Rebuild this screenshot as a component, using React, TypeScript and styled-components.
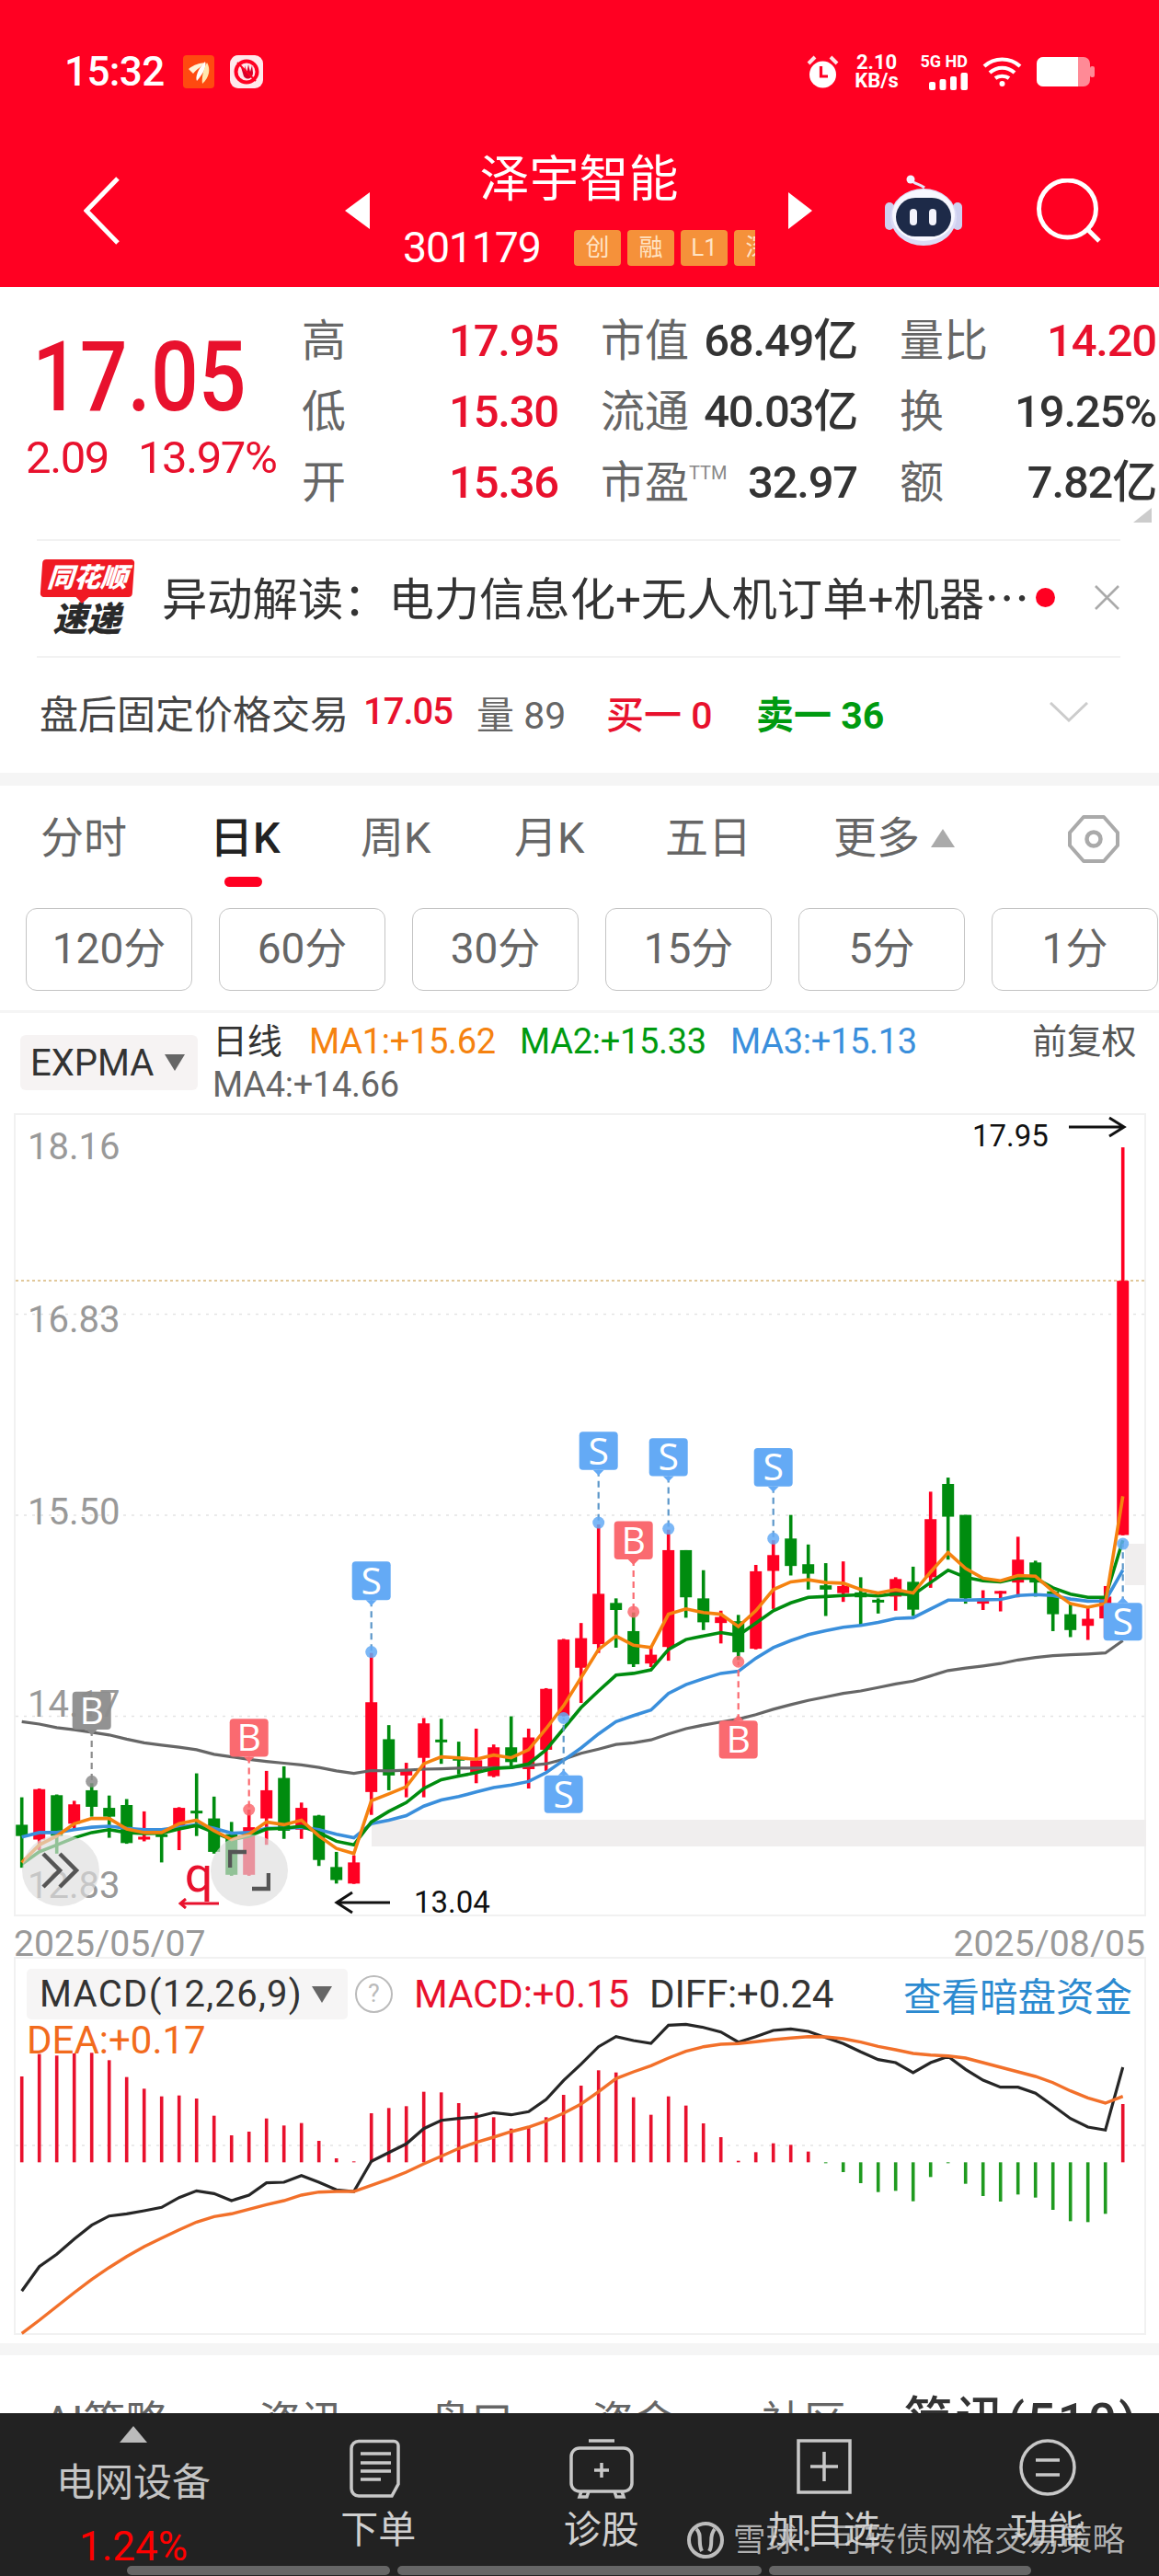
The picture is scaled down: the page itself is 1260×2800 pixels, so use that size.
import React from "react";
import styled, { createGlobalStyle } from "styled-components";

const Global = createGlobalStyle`
  html, body { margin: 0; padding: 0; background: #fff; }
  body { font-family: Roboto, "Noto Sans CJK SC", sans-serif; }
  * { box-sizing: border-box; }
`;

const RED = "#ff0022";
const TEXT_RED = "#e8112d";
const GREEN = "#008c0f";

const Page = styled.div`
  width: 1260px;
  height: 2800px;
  overflow: hidden;
  background: #fff;
  display: flex;
  flex-direction: column;
`;

/* ---------- header ---------- */
const Header = styled.header`
  height: 312px;
  flex: none;
  background: ${RED};
  color: #fff;
`;
const StatusBar = styled.div`
  height: 156px;
  display: flex;
  align-items: center;
  padding: 0 70px 0 70px;
`;
const Clock = styled.span`
  font-size: 44px;
  font-weight: 500;
  line-height: 1;
  letter-spacing: -0.6px;
  width: 129px;
`;
const StatusApps = styled.div`
  display: flex;
  gap: 17px;
  align-items: center;
`;
const StatusRight = styled.div`
  margin-left: auto;
  display: flex;
  align-items: center;
  gap: 16px;
`;
const NetSpeed = styled.div`
  display: flex;
  flex-direction: column;
  align-items: center;
  font-size: 22px;
  font-weight: 700;
  line-height: 20px;
  width: 50px;
  white-space: nowrap;
`;
const SignalBlock = styled.div`
  display: flex;
  flex-direction: column;
  align-items: flex-end;
  gap: 5px;
  width: 58px;
`;
const SignalLabel = styled.span`
  font-size: 18px;
  font-weight: 700;
  line-height: 15px;
  white-space: nowrap;
`;
const NavBar = styled.div`
  height: 156px;
  display: flex;
  align-items: center;
  padding: 0 0 10px 91px;
`;
const CenterGroup = styled.div`
  margin-left: 245px;
  display: flex;
  align-items: center;
  gap: 36px;
`;
const TitleStack = styled.div`
  width: 383px;
  display: flex;
  flex-direction: column;
  gap: 28px;
`;
const Title = styled.div`
  font-size: 54px;
  line-height: 52px;
  text-align: center;
`;
const CodeRow = styled.div`
  display: flex;
  align-items: center;
  height: 39px;
`;
const Code = styled.span`
  font-size: 46.5px;
  width: 186px;
  line-height: 39px;
  letter-spacing: -1.2px;
`;
const TagClip = styled.div`
  width: 197px;
  overflow: hidden;
  display: flex;
  gap: 7px;
`;
const Tag = styled.span`
  flex: none;
  width: 51px;
  height: 39px;
  border-radius: 4px;
  background: #f5913a;
  color: #ffe3c4;
  font-size: 26px;
  line-height: 39px;
  text-align: center;
`;
const NavIcons = styled.div`
  margin-left: 79px;
  display: flex;
  align-items: center;
  gap: 81px;
`;

/* ---------- quote ---------- */
const QuoteRow = styled.section`
  position: relative;
  height: 274px;
  flex: none;
  display: flex;
  padding-top: 20px;
`;
const PriceColumn = styled.div`
  width: 328px;
  flex: none;
  padding-top: 28px;
`;
const BigPrice = styled.div`
  font-size: 106px;
  font-weight: 500;
  line-height: 100px;
  color: ${TEXT_RED};
  margin-left: 35px;
  transform: scaleX(0.86);
  transform-origin: left;
`;
const ChangeRow = styled.div`
  margin: 13px 0 0 28px;
  display: flex;
  gap: 32px;
  font-size: 49px;
  line-height: 50px;
  color: ${TEXT_RED};
  letter-spacing: -1.4px;
  white-space: nowrap;
`;
const StatsGrid = styled.div`
  display: grid;
  grid-template-columns: 279px 279px 279px;
  grid-auto-rows: 77px;
  column-gap: 46px;
`;
const Stat = styled.div`
  display: flex;
  justify-content: space-between;
  align-items: center;
  white-space: nowrap;
`;
const StatLabel = styled.span`
  font-size: 48px;
  color: #666;
  line-height: 77px;
`;
const Sup = styled.sup`
  font-size: 20px;
  color: #888;
  line-height: 1;
  vertical-align: 20px;
`;
const StatValue = styled.span<{ $red?: boolean }>`
  font-size: 49px;
  font-weight: 500;
  letter-spacing: -1.2px;
  line-height: 77px;
  color: ${(p) => (p.$red ? TEXT_RED : "#333")};
`;
const CornerMark = styled.div`
  position: absolute;
  left: 1232px;
  top: 240px;
  width: 0;
  height: 0;
  border-bottom: 16px solid #ccc;
  border-left: 20px solid transparent;
`;
const Divider = styled.div`
  height: 2px;
  flex: none;
  margin: 0 42px 0 40px;
  background: #f2f2f2;
`;
const NewsRow = styled.div`
  height: 125px;
  flex: none;
  display: flex;
  align-items: center;
  padding: 0 0 2px 43px;
`;
const Logo = styled.div`
  width: 103px;
  flex: none;
  display: flex;
  flex-direction: column;
  align-items: center;
`;
const LogoBubble = styled.div`
  position: relative;
  width: 100px;
  height: 41px;
  border-radius: 4px;
  background: #f01a24;
  color: #fff;
  font-size: 29px;
  font-weight: 900;
  font-style: italic;
  line-height: 41px;
  text-align: center;
  white-space: nowrap;
  transform: skewX(-4deg);
  &::after {
    content: "";
    position: absolute;
    left: 38px;
    bottom: -7px;
    border-top: 8px solid #f01a24;
    border-left: 8px solid transparent;
    border-right: 8px solid transparent;
  }
`;
const LogoText = styled.div`
  margin-top: 8px;
  font-size: 37px;
  line-height: 34px;
  font-weight: 900;
  font-style: italic;
  color: #2a2a2a;
`;
const NewsText = styled.div`
  width: 945px;
  margin: 0 0 5px 30px;
  font-size: 49.3px;
  color: #333;
  white-space: nowrap;
  overflow: hidden;
`;
const RedDot = styled.span`
  width: 21px;
  height: 21px;
  flex: none;
  margin-left: 5px;
  border-radius: 50%;
  background: ${RED};
`;
const CloseIcon = styled.span`
  margin-left: 43px;
  display: flex;
`;
const AfterRow = styled.div`
  height: 125px;
  flex: none;
  display: flex;
  align-items: center;
  padding: 0 0 8px 43px;
  font-size: 42px;
  white-space: nowrap;
`;
const AfterLabel = styled.span`
  width: 352px;
  color: #444;
`;
const AfterPrice = styled.span`
  width: 123px;
  color: ${TEXT_RED};
  font-size: 40px;
  font-weight: 500;
  letter-spacing: -1px;
`;
const AfterVol = styled.span`
  width: 141px;
  color: #666;
  font-weight: 400;
  font-size: 41px;
`;
const AfterBuy = styled.span`
  width: 163px;
  color: ${TEXT_RED};
  font-weight: 500;
  font-size: 41px;
`;
const AfterSell = styled.span`
  width: 319px;
  color: #009a10;
  font-weight: 700;
  font-size: 41px;
`;
const GrayBand = styled.div<{ $h: number; $mt?: number }>`
  height: ${(p) => p.$h}px;
  margin-top: ${(p) => p.$mt || 0}px;
  flex: none;
  background: #f5f5f5;
`;

/* ---------- period tabs ---------- */
const PeriodTabs = styled.nav`
  height: 116px;
  flex: none;
  display: grid;
  grid-template-columns: 184px 164px 167px 164px 183px 255px auto;
  align-items: center;
  padding: 0 0 0 44px;
`;
const PeriodTab = styled.span<{ $active?: boolean }>`
  position: relative;
  font-size: 47px;
  line-height: 60px;
  margin-bottom: 3px;
  color: ${(p) => (p.$active ? "#222" : "#666")};
  font-weight: ${(p) => (p.$active ? 500 : 400)};
  display: flex;
  align-items: center;
  gap: 12px;
  ${(p) =>
    p.$active
      ? `&::after { content: ""; position: absolute; left: 16px; top: 72px; width: 41px; height: 11px; border-radius: 6px; background: ${RED}; }`
      : ""}
`;
const MoreMark = styled.span`
  width: 0;
  height: 0;
  border-bottom: 20px solid #aaa;
  border-left: 13px solid transparent;
  border-right: 13px solid transparent;
`;
const IntervalRow = styled.div`
  display: flex;
  flex: none;
  gap: 29px;
  padding-left: 28px;
  margin-top: 17px;
  width: 1300px;
`;
const IntervalButton = styled.div`
  width: 181px;
  height: 90px;
  border: 1.5px solid #c4c4c4;
  border-radius: 12px;
  font-size: 46px;
  line-height: 87px;
  text-align: center;
  color: #666;
`;
const ThinBand = styled.div`
  height: 3px;
  flex: none;
  margin-top: 21px;
  background: #f5f5f5;
`;

/* ---------- indicator legend ---------- */
const LegendRow = styled.div`
  height: 109px;
  flex: none;
  display: flex;
`;
const IndicatorPill = styled.div`
  margin: 24px 0 0 22px;
  width: 193px;
  height: 60px;
  flex: none;
  border-radius: 6px;
  background: #f6f3f3;
  display: flex;
  align-items: center;
  gap: 12px;
  padding-left: 11px;
  font-size: 40px;
  color: #333;
`;
const DownMark = styled.span<{ $c?: string }>`
  width: 0;
  height: 0;
  border-top: 18px solid ${(p) => p.$c || "#666"};
  border-left: 11px solid transparent;
  border-right: 11px solid transparent;
`;
const LegendBody = styled.div`
  margin-left: 16px;
  padding-top: 8px;
  flex: 1;
`;
const LegendLine = styled.div`
  display: grid;
  grid-template-columns: 105px 229px 229px 328px auto;
  height: 47px;
  align-items: center;
  white-space: nowrap;
`;
const LegendText = styled.span<{ $c: string; $size?: number }>`
  color: ${(p) => p.$c};
  font-size: ${(p) => p.$size || 38}px;
  line-height: 47px;
  letter-spacing: -0.3px;
`;

/* ---------- chart panes ---------- */
const KPane = styled.div`
  position: relative;
  flex: none;
  width: 1231px;
  height: 873px;
  margin-left: 15px;
  box-shadow: inset 0 0 0 2px #f1f1f1;
`;
const ChartSvg = styled.svg`
  position: absolute;
  left: 0;
  top: 0;
  overflow: visible;
`;
const AxisLabel = styled.text`
  font-size: 40px;
  fill: #999;
  font-family: Roboto, sans-serif;
`;
const NoteLabel = styled.text`
  font-size: 33px;
  fill: #111;
  font-family: Roboto, sans-serif;
`;
const TagLetter = styled.text`
  font-size: 41px;
  fill: #fff;
  font-family: "Open Sans", sans-serif;
  text-anchor: middle;
`;
const FloatButton = styled.div<{ $left: number }>`
  position: absolute;
  left: ${(p) => p.$left}px;
  top: 784px;
  width: 84px;
  height: 78px;
  border-radius: 50%;
  background: rgba(222, 222, 222, 0.66);
  display: flex;
  align-items: center;
  justify-content: center;
`;
const RedQ = styled.div`
  position: absolute;
  left: 177px;
  top: 803px;
  width: 48px;
  display: flex;
  flex-direction: column;
  align-items: center;
  color: ${TEXT_RED};
  font-size: 54px;
  line-height: 50px;
`;
const DateRow = styled.div`
  height: 44px;
  flex: none;
  margin: 0 15px;
  padding-top: 16px;
  display: flex;
  justify-content: space-between;
  font-size: 39.2px;
  line-height: 28px;
  color: #999;
`;
const MacdPane = styled.div`
  position: relative;
  flex: none;
  width: 1231px;
  height: 411px;
  margin-left: 15px;
  box-shadow: inset 0 0 0 2px #f1f1f1;
`;
const MacdHead = styled.div`
  position: relative;
  display: flex;
  align-items: center;
  height: 55px;
  margin-top: 13px;
  padding-left: 14px;
  white-space: nowrap;
`;
const MacdPill = styled.div`
  width: 349px;
  height: 55px;
  border-radius: 5px;
  background: #f6f5f5;
  display: flex;
  align-items: center;
  gap: 10px;
  padding-left: 14px;
  font-size: 40px;
  letter-spacing: 1.3px;
  color: #333;
`;
const HelpMark = styled.span`
  width: 41px;
  height: 41px;
  margin-left: 8px;
  border: 2px solid #bbb;
  border-radius: 50%;
  color: #bbb;
  font-size: 27px;
  line-height: 37px;
  text-align: center;
`;
const MacdValue = styled.span<{ $c: string; $ml: number }>`
  color: ${(p) => p.$c};
  margin-left: ${(p) => p.$ml}px;
  font-size: 42px;
  letter-spacing: -0.1px;
`;
const MacdLink = styled.span`
  margin-left: auto;
  padding-right: 15px;
  color: #2b8ad0;
  font-size: 41.5px;
`;
const DeaLine = styled.div`
  position: relative;
  padding-left: 14px;
  margin-top: 3px;
  color: #f26b1d;
  font-size: 42px;
  line-height: 40px;
`;

/* ---------- bottom ---------- */
const SectionTabs = styled.div`
  height: 63px;
  flex: none;
  overflow: hidden;
  display: grid;
  grid-template-columns: 233px 185px 177px 185px 154px auto;
  padding: 42px 0 0 48px;
  align-items: start;
  white-space: nowrap;
`;
const SectionTab = styled.span<{ $active?: boolean }>`
  font-size: ${(p) => (p.$active ? 54 : 46)}px;
  font-weight: ${(p) => (p.$active ? 500 : 400)};
  color: ${(p) => (p.$active ? "#333" : "#666")};
  line-height: 60px;
  letter-spacing: ${(p) => (p.$active ? 2.6 : 0)}px;
`;
const Footer = styled.footer`
  position: relative;
  height: 179px;
  flex: none;
  background: #222;
  display: flex;
  flex-direction: column;
`;
const FooterGrid = styled.div`
  height: 166px;
  display: grid;
  grid-template-columns: 290px repeat(4, 242.5px);
`;
const SectorCell = styled.div`
  display: flex;
  flex-direction: column;
  align-items: center;
  padding-top: 14px;
`;
const UpMark = styled.span`
  width: 0;
  height: 0;
  border-bottom: 18px solid #bbb;
  border-left: 15px solid transparent;
  border-right: 15px solid transparent;
`;
const SectorName = styled.span`
  margin-top: 23px;
  color: #c4c4c4;
  font-size: 42px;
  line-height: 41px;
`;
const SectorPct = styled.span`
  margin-top: 29px;
  color: #f00;
  font-size: 44px;
  line-height: 40px;
`;
const ActionCell = styled.div`
  display: flex;
  flex-direction: column;
  align-items: center;
  padding-top: 27px;
`;
const ActionIcon = styled.svg`
  width: 72px;
  height: 66px;
  flex: none;
  fill: none;
  stroke: #c8c8c8;
  stroke-width: 3.5;
`;
const ActionLabel = styled.span`
  margin-top: 14px;
  color: #d0d0d0;
  font-size: 41px;
  line-height: 41px;
`;
const Watermark = styled.div`
  position: absolute;
  left: 746px;
  top: 116px;
  display: flex;
  align-items: center;
  gap: 9px;
  color: rgba(255, 255, 255, 0.66);
  font-size: 35.5px;
  line-height: 43px;
  white-space: nowrap;
  text-shadow: 0 0 2px rgba(0, 0, 0, 0.4);
`;
const GestureRow = styled.div`
  display: flex;
  gap: 8px;
  padding-left: 138px;
`;
const GestureBar = styled.span<{ $w: number }>`
  width: ${(p) => p.$w}px;
  height: 10px;
  border-radius: 5px;
  background: #666;
`;

/* ---------- chart data (values digitised from the reference) ---------- */
const cx = (i: number) => 23.7 + 19.0 * i;
const ky = (z: number) => 1500 + z / 2.613;
const my = (z: number) => 2060 + z / 3;

type Candle = [number, number, number, number, "r" | "g"];
const candles: Candle[] = [
  [1180, 1258, 1290, 1380, "g"], [1155, 1157, 1300, 1330, "r"], [1172, 1174, 1290, 1340, "g"], [1190, 1200, 1255, 1270, "r"],
  [1140, 1160, 1207, 1235, "g"], [1175, 1210, 1235, 1295, "g"], [1185, 1202, 1310, 1312, "g"], [1220, 1292, 1300, 1305, "r"],
  [1285, 1285, 1288, 1365, "g"], [1208, 1210, 1260, 1330, "r"], [1112, 1218, 1222, 1290, "g"], [1178, 1240, 1335, 1340, "g"],
  [1250, 1285, 1400, 1403, "g"], [1215, 1265, 1400, 1403, "r"], [1105, 1160, 1240, 1315, "r"], [1092, 1125, 1275, 1298, "g"],
  [1195, 1210, 1272, 1298, "r"], [1230, 1232, 1358, 1375, "g"], [1335, 1378, 1415, 1425, "g"], [1345, 1365, 1425, 1426, "r"],
  [770, 910, 1165, 1230, "r"], [975, 1015, 1118, 1160, "g"], [1082, 1105, 1118, 1180, "r"], [955, 970, 1068, 1180, "r"],
  [957, 1016, 1020, 1085, "g"], [1022, 1068, 1072, 1115, "g"], [985, 1075, 1110, 1140, "r"], [1030, 1038, 1120, 1123, "r"],
  [950, 1038, 1080, 1100, "g"], [985, 1010, 1100, 1155, "r"], [870, 872, 1045, 1105, "r"], [730, 732, 948, 950, "r"],
  [685, 728, 812, 912, "r"], [405, 602, 745, 770, "r"], [615, 628, 648, 755, "g"], [655, 708, 802, 810, "g"],
  [750, 775, 800, 810, "r"], [420, 478, 753, 792, "r"], [478, 478, 612, 670, "g"], [535, 615, 683, 705, "g"],
  [650, 668, 685, 743, "r"], [662, 680, 768, 790, "g"], [520, 538, 758, 760, "r"], [450, 492, 537, 645, "r"],
  [378, 445, 523, 550, "g"], [462, 518, 545, 590, "g"], [515, 578, 590, 665, "g"], [510, 580, 600, 625, "r"],
  [555, 598, 612, 695, "g"], [615, 619, 623, 658, "g"], [555, 560, 610, 650, "r"], [525, 568, 647, 665, "g"],
  [312, 390, 555, 585, "r"], [272, 290, 383, 505, "g"], [378, 378, 615, 630, "g"], [592, 622, 630, 648, "r"],
  [594, 594, 600, 652, "r"], [440, 505, 570, 612, "r"], [508, 513, 570, 610, "g"], [595, 595, 660, 708, "g"],
  [630, 660, 705, 725, "g"], [640, 673, 693, 733, "r"], [580, 610, 672, 727, "r"], [-666, -287, 435, 436, "r"],
];

const ma1 = [1365, 1315, 1290, 1255, 1240, 1240, 1270, 1280, 1280, 1255, 1245, 1275, 1300, 1285, 1250, 1258, 1245, 1290, 1325, 1340, 1190, 1170, 1150, 1085, 1065, 1068, 1072, 1060, 1068, 1045, 985, 920, 840, 760, 722, 748, 755, 660, 645, 655, 660, 695, 650, 590, 568, 562, 570, 572, 590, 600, 590, 600, 540, 485, 530, 558, 565, 550, 552, 595, 630, 640, 630, 325];
const ma2 = [1370, 1335, 1315, 1295, 1280, 1272, 1280, 1283, 1282, 1270, 1260, 1280, 1300, 1290, 1270, 1268, 1262, 1280, 1305, 1315, 1250, 1220, 1195, 1155, 1130, 1120, 1110, 1098, 1095, 1085, 1045, 985, 925, 878, 833, 828, 818, 760, 732, 722, 712, 720, 685, 650, 628, 612, 610, 607, 605, 608, 602, 605, 570, 535, 555, 565, 568, 557, 558, 585, 603, 612, 612, 450];
const ma3 = [1293, 1280, 1280, 1272, 1265, 1262, 1268, 1272, 1272, 1265, 1258, 1268, 1282, 1280, 1268, 1268, 1265, 1272, 1285, 1295, 1255, 1245, 1232, 1205, 1188, 1178, 1165, 1152, 1145, 1135, 1110, 1075, 1040, 1000, 965, 948, 932, 885, 860, 843, 828, 822, 785, 755, 735, 718, 707, 697, 692, 683, 672, 670, 645, 620, 620, 619, 618, 607, 604, 607, 617, 623, 622, 535];
const ma4 = [965, 972, 982, 988, 995, 1003, 1015, 1025, 1032, 1038, 1045, 1058, 1065, 1072, 1078, 1083, 1088, 1095, 1105, 1112, 1104, 1105, 1103, 1100, 1099, 1097, 1097, 1096, 1095, 1090, 1085, 1072, 1055, 1043, 1030, 1025, 1017, 1000, 985, 975, 966, 958, 945, 930, 917, 905, 895, 885, 878, 868, 858, 850, 835, 820, 813, 807, 800, 790, 783, 778, 775, 773, 770, 735];

const macdBars = [585, 512, 517, 510, 508, 532, 587, 625, 650, 647, 657, 713, 777, 765, 722, 745, 737, 795, 852, 862, 705, 688, 682, 635, 637, 672, 703, 718, 755, 748, 718, 645, 615, 565, 572, 653, 710, 650, 680, 738, 783, 860, 832, 803, 808, 830, 868, 897, 933, 962, 958, 992, 913, 868, 935, 975, 993, 970, 980, 1020, 1057, 1060, 1033, 675];
const diff = [1285, 1205, 1165, 1115, 1070, 1040, 1033, 1023, 1012, 980, 958, 967, 990, 972, 932, 930, 908, 930, 955, 960, 862, 833, 805, 755, 728, 722, 717, 703, 710, 700, 660, 598, 545, 488, 455, 468, 477, 418, 415, 425, 440, 473, 455, 435, 430, 438, 458, 478, 505, 530, 540, 573, 540, 520, 562, 597, 620, 620, 640, 680, 722, 750, 760, 555];
const dea = [1423, 1380, 1335, 1290, 1247, 1208, 1172, 1140, 1112, 1085, 1060, 1042, 1033, 1018, 1003, 990, 972, 962, 960, 960, 940, 920, 897, 870, 845, 820, 800, 783, 765, 750, 730, 705, 675, 635, 592, 570, 550, 525, 503, 488, 480, 478, 472, 465, 460, 455, 456, 462, 473, 487, 498, 510, 515, 518, 525, 540, 555, 570, 585, 605, 632, 655, 672, 650];

const toLine = (vals: number[], f: (z: number) => number) =>
  vals.map((v, i) => `${cx(i).toFixed(1)},${f(v).toFixed(1)}`).join(" ");

type Pin = { i: number; top: number; bot: number; dot: number; letter: string; color: string };
const BLUE_PIN = "#64aaf5";
const RED_PIN = "#fa6a70";
const GRAY_PIN = "#8c8c8c";
const pins: Pin[] = [
  { i: 4, top: 880, bot: 988, dot: 1135, letter: "B", color: GRAY_PIN },
  { i: 13, top: 957, bot: 1065, dot: 1215, letter: "B", color: RED_PIN },
  { i: 20, top: 510, bot: 620, dot: 767, letter: "S", color: BLUE_PIN },
  { i: 31, top: 1118, bot: 1225, dot: 955, letter: "S", color: BLUE_PIN },
  { i: 33, top: 142, bot: 250, dot: 400, letter: "S", color: BLUE_PIN },
  { i: 35, top: 396, bot: 504, dot: 653, letter: "B", color: RED_PIN },
  { i: 37, top: 160, bot: 268, dot: 417, letter: "S", color: BLUE_PIN },
  { i: 41, top: 962, bot: 1070, dot: 795, letter: "B", color: RED_PIN },
  { i: 43, top: 188, bot: 297, dot: 445, letter: "S", color: BLUE_PIN },
  { i: 63, top: 628, bot: 735, dot: 460, letter: "S", color: BLUE_PIN },
];

const PinMark = ({ p }: { p: Pin }) => {
  const x = cx(p.i);
  const t = ky(p.top);
  const b = ky(p.bot);
  const d = ky(p.dot);
  const below = p.dot > p.bot;
  const edge = below ? b : t;
  const dir = below ? 1 : -1;
  return (
    <g>
      <line x1={x} x2={x} y1={edge} y2={d} stroke={p.color === BLUE_PIN ? "#5c97c9" : p.color} strokeWidth={2.2} strokeDasharray="7 5" />
      <circle cx={x} cy={d} r={6.5} fill={p.color} opacity={0.85} />
      <rect x={x - 21} y={t} width={42} height={b - t} rx={4} fill={p.color} opacity={p.color === GRAY_PIN ? 0.95 : 1} />
      <polygon points={`${x - 6},${edge} ${x + 6},${edge} ${x},${edge + dir * 6}`} fill={p.color} />
      <TagLetter x={x} y={(t + b) / 2 + 14.5}>{p.letter}</TagLetter>
    </g>
  );
};

const KChart = () => (
  <ChartSvg width={1231} height={873} viewBox="15 1208 1231 873">
    {[1426.4, 1645, 1863.6].map((y) => (
      <line key={y} x1={17} x2={1244} y1={y} y2={y} stroke="#e4e4e4" strokeWidth={1.5} strokeDasharray="3 6" />
    ))}
    <line x1={17} x2={1244} y1={1390} y2={1390} stroke="#d8b67a" strokeWidth={1.5} strokeDasharray="3 3" />
    <rect x={404} y={1976} width={842} height={29} fill="#f0eeee" />
    <rect x={1223} y={1676} width={23} height={45} fill="#f0eeee" />
    <AxisLabel x={30} y={1258}>18.16</AxisLabel>
    <AxisLabel x={30} y={1446}>16.83</AxisLabel>
    <AxisLabel x={30} y={1655}>15.50</AxisLabel>
    <AxisLabel x={30} y={1864}>14.17</AxisLabel>
    <AxisLabel x={30} y={2061}>12.83</AxisLabel>
    {candles.map(([top, bt, bb, bot, c], i) => {
      const col = c === "r" ? RED : GREEN;
      return (
        <g key={i}>
          <rect x={cx(i) - 1.8} y={ky(top)} width={3.6} height={ky(bot) - ky(top)} fill={col} />
          <rect x={cx(i) - 6.5} y={ky(bt)} width={13} height={Math.max(3, ky(bb) - ky(bt))} fill={col} />
        </g>
      );
    })}
    <polyline points={toLine(ma4, ky)} fill="none" stroke="#666" strokeWidth={3.2} />
    <polyline points={toLine(ma3, ky)} fill="none" stroke="#3a8fdc" strokeWidth={3.6} />
    <polyline points={toLine(ma2, ky)} fill="none" stroke={GREEN} strokeWidth={3.6} />
    <polyline points={toLine(ma1, ky)} fill="none" stroke="#f5820f" strokeWidth={3.6} />
    {pins.map((p) => (
      <PinMark key={`${p.i}`} p={p} />
    ))}
    <NoteLabel x={1057} y={1244}>17.95</NoteLabel>
    <path d="M1162 1223H1221M1206 1213L1222 1223L1206 1233" fill="none" stroke="#111" strokeWidth={3} />
    <NoteLabel x={450} y={2077}>13.04</NoteLabel>
    <path d="M424 2066H366M383 2055L366 2066L383 2077" fill="none" stroke="#111" strokeWidth={3} />
  </ChartSvg>
);

const MacdChart = () => (
  <ChartSvg width={1231} height={411} viewBox="15 2125 1231 411">
    <line x1={17} x2={1244} y1={2330} y2={2330} stroke="#e4e4e4" strokeWidth={1.5} strokeDasharray="3 6" />
    {macdBars.map((z, i) => {
      const zero = my(865);
      const y = my(z);
      const up = y < zero;
      return (
        <rect key={i} x={cx(i) - 1.8} y={up ? y : zero} width={3.6} height={Math.abs(zero - y)} fill={up ? TEXT_RED : "#1f9a1f"} />
      );
    })}
    <polyline points={toLine(diff, my)} fill="none" stroke="#262626" strokeWidth={3.2} />
    <polyline points={toLine(dea, my)} fill="none" stroke="#f2702a" strokeWidth={3.4} />
  </ChartSvg>
);

export default function App() {
  return (
    <Page>
      <Global />
      <Header>
        <StatusBar>
          <Clock>15:32</Clock>
          <StatusApps>
            <svg width="34" height="36" viewBox="0 0 34 36">
              <rect width="34" height="36" rx="4" fill="#ff4a10" />
              <path d="M6 15C12 10 18 9 23 8C21 12 15 15 11 20Z" fill="#fff4d6" />
              <path d="M24 7C26 12 22 20 15 28C13 24 16 15 24 7Z" fill="#ffffff" />
              <path d="M26 8C30 14 29 24 21 31C20 25 22 15 26 8Z" fill="#ffe9b0" />
            </svg>
            <svg width="36" height="36" viewBox="0 0 36 36">
              <rect width="36" height="36" rx="9" fill="#ffe9ec" />
              <circle cx="18" cy="18" r="13.5" fill={RED} />
              <circle cx="18" cy="18" r="9.5" fill="#ffe9ec" />
              <path d="M12 13L15 23C19 28 25 25 25 19L24 11L22 18L20 10L18.5 18L16 11L16.5 18L13 12Z" fill="#d9002a" />
              <path d="M8 8L28 28" stroke={RED} strokeWidth="2" />
            </svg>
          </StatusApps>
          <StatusRight>
            <svg width="35" height="36" viewBox="0 0 35 36">
              <path d="M2 9L9 2M33 9L26 2" stroke="#ffe3e6" strokeWidth="4" />
              <circle cx="17.5" cy="21" r="14.5" fill="#fff" />
              <path d="M15.5 12V23H23" stroke={RED} strokeWidth="3.2" fill="none" />
            </svg>
            <NetSpeed>
              <span>2.10</span>
              <span>KB/s</span>
            </NetSpeed>
            <SignalBlock>
              <SignalLabel>5G HD</SignalLabel>
              <svg width="42" height="19" viewBox="0 0 42 19" fill="#fff">
                <rect x="0" y="10" width="7" height="9" rx="2" />
                <rect x="11.5" y="7" width="7" height="12" rx="2" />
                <rect x="23" y="4" width="7" height="15" rx="2" />
                <rect x="34.5" y="0" width="7.5" height="19" rx="2" />
              </svg>
            </SignalBlock>
            <svg width="43" height="32" viewBox="0 0 43 32" fill="none" stroke="#fff" strokeWidth="4.2">
              <path d="M2 10C13 0 30 0 41 10" />
              <path d="M8 17C16 10 27 10 35 17" />
              <path d="M14 23C18 20 25 20 29 23" />
              <circle cx="21.5" cy="29" r="3" fill="#fff" stroke="none" />
            </svg>
            <svg width="63" height="32" viewBox="0 0 63 32">
              <rect x="0" y="0" width="58" height="32" rx="7" fill="#ff8a96" />
              <path d="M7 0H45V32H7A7 7 0 0 1 0 25V7A7 7 0 0 1 7 0Z" fill="#fff" />
              <rect x="58" y="10" width="5" height="12" rx="2" fill="#ff8a96" />
            </svg>
          </StatusRight>
        </StatusBar>
        <NavBar>
          <svg width="39" height="74" viewBox="0 0 39 74" fill="none" stroke="#fff" strokeWidth="5">
            <path d="M37 2L3 37L37 72" />
          </svg>
          <CenterGroup>
            <svg width="27" height="40" viewBox="0 0 27 40"><polygon points="27,0 27,40 0,20" fill="#fff" /></svg>
            <TitleStack>
              <Title>泽宇智能</Title>
              <CodeRow>
                <Code>301179</Code>
                <TagClip>
                  <Tag>创</Tag>
                  <Tag>融</Tag>
                  <Tag>L1</Tag>
                  <Tag>深</Tag>
                </TagClip>
              </CodeRow>
            </TitleStack>
            <svg width="26" height="40" viewBox="0 0 26 40"><polygon points="0,0 0,40 26,20" fill="#fff" /></svg>
          </CenterGroup>
          <NavIcons>
            <svg width="84" height="78" viewBox="0 0 84 78">
              <path d="M28 5C32 11 37 9 43 14" stroke="#e6e4f8" strokeWidth="3" fill="none" />
              <circle cx="28" cy="5" r="4.5" fill="#f4f3ff" />
              <rect x="0" y="30" width="10" height="30" rx="5" fill="#cfd0ef" />
              <rect x="74" y="30" width="10" height="30" rx="5" fill="#cfd0ef" />
              <ellipse cx="42" cy="46" rx="36" ry="31" fill="#dcdcf6" />
              <ellipse cx="42" cy="44" rx="34" ry="28" fill="#f8f8ff" />
              <rect x="12" y="25" width="60" height="42" rx="21" fill="#1d2a48" />
              <rect x="27" y="37" width="8" height="18" rx="4" fill="#f3f3fb" />
              <rect x="48" y="37" width="8" height="18" rx="4" fill="#f3f3fb" />
            </svg>
            <svg width="70" height="70" viewBox="0 0 70 70" fill="none" stroke="#fff" strokeWidth="5">
              <ellipse cx="33.5" cy="33" rx="31" ry="31" />
              <path d="M56 56L68 68" />
            </svg>
          </NavIcons>
        </NavBar>
      </Header>

      <QuoteRow>
        <PriceColumn>
          <BigPrice>17.05</BigPrice>
          <ChangeRow>
            <span>2.09</span>
            <span>13.97%</span>
          </ChangeRow>
        </PriceColumn>
        <StatsGrid>
          <Stat><StatLabel>高</StatLabel><StatValue $red>17.95</StatValue></Stat>
          <Stat><StatLabel>市值</StatLabel><StatValue>68.49亿</StatValue></Stat>
          <Stat><StatLabel>量比</StatLabel><StatValue $red>14.20</StatValue></Stat>
          <Stat><StatLabel>低</StatLabel><StatValue $red>15.30</StatValue></Stat>
          <Stat><StatLabel>流通</StatLabel><StatValue>40.03亿</StatValue></Stat>
          <Stat><StatLabel>换</StatLabel><StatValue>19.25%</StatValue></Stat>
          <Stat><StatLabel>开</StatLabel><StatValue $red>15.36</StatValue></Stat>
          <Stat><StatLabel>市盈<Sup>TTM</Sup></StatLabel><StatValue>32.97</StatValue></Stat>
          <Stat><StatLabel>额</StatLabel><StatValue>7.82亿</StatValue></Stat>
        </StatsGrid>
        <CornerMark />
      </QuoteRow>
      <Divider />
      <NewsRow>
        <Logo>
          <LogoBubble>同花顺</LogoBubble>
          <LogoText>速递</LogoText>
        </Logo>
        <NewsText>异动解读：电力信息化+无人机订单+机器⋯</NewsText>
        <RedDot />
        <CloseIcon>
          <svg width="27" height="27" viewBox="0 0 27 27" stroke="#aaa" strokeWidth="2.6">
            <path d="M1 1L26 26M26 1L1 26" />
          </svg>
        </CloseIcon>
      </NewsRow>
      <Divider />
      <AfterRow>
        <AfterLabel>盘后固定价格交易</AfterLabel>
        <AfterPrice>17.05</AfterPrice>
        <AfterVol>量 89</AfterVol>
        <AfterBuy>买一 0</AfterBuy>
        <AfterSell>卖一 36</AfterSell>
        <svg width="42" height="22" viewBox="0 0 42 22" fill="none" stroke="#ccc" strokeWidth="3">
          <path d="M1 1L21 20L41 1" />
        </svg>
      </AfterRow>
      <GrayBand $h={14} />

      <PeriodTabs>
        <PeriodTab>分时</PeriodTab>
        <PeriodTab $active>日K</PeriodTab>
        <PeriodTab>周K</PeriodTab>
        <PeriodTab>月K</PeriodTab>
        <PeriodTab>五日</PeriodTab>
        <PeriodTab>更多<MoreMark /></PeriodTab>
        <svg width="56" height="54" viewBox="0 0 56 54" fill="none" stroke="#aaa" strokeWidth="4">
          <path d="M17 3H39L54 20V34L39 51H17L2 34V20Z" strokeLinejoin="round" />
          <circle cx="28" cy="27" r="7.5" strokeWidth="4.5" />
        </svg>
      </PeriodTabs>
      <IntervalRow>
        {["120分", "60分", "30分", "15分", "5分", "1分"].map((t) => (
          <IntervalButton key={t}>{t}</IntervalButton>
        ))}
      </IntervalRow>
      <ThinBand />

      <LegendRow>
        <IndicatorPill>EXPMA<DownMark /></IndicatorPill>
        <LegendBody>
          <LegendLine>
            <LegendText $c="#333">日线</LegendText>
            <LegendText $c="#f5820f">MA1:+15.62</LegendText>
            <LegendText $c="#009a10">MA2:+15.33</LegendText>
            <LegendText $c="#3a8fdc">MA3:+15.13</LegendText>
            <LegendText $c="#555">前复权</LegendText>
          </LegendLine>
          <LegendLine>
            <LegendText $c="#666">MA4:+14.66</LegendText>
          </LegendLine>
        </LegendBody>
      </LegendRow>

      <KPane>
        <KChart />
        <FloatButton $left={9}>
          <svg width="42" height="40" viewBox="0 0 42 40" fill="none" stroke="#555" strokeWidth="4.5">
            <path d="M2 2L20 20L2 38M20 2L38 20L20 38" />
          </svg>
        </FloatButton>
        <FloatButton $left={214}>
          <svg width="46" height="46" viewBox="0 0 46 46" fill="none" stroke="#555" strokeWidth="4.5">
            <path d="M2 20V3H20M44 26V43H26" />
          </svg>
        </FloatButton>
        <RedQ>
          q
          <svg width="44" height="12" viewBox="0 0 44 12" fill="none" stroke={TEXT_RED} strokeWidth="3">
            <path d="M44 6H2M8 1L2 6L8 11" />
          </svg>
        </RedQ>
      </KPane>
      <DateRow>
        <span>2025/05/07</span>
        <span>2025/08/05</span>
      </DateRow>
      <MacdPane>
        <MacdChart />
        <MacdHead>
          <MacdPill>MACD(12,26,9)<DownMark /></MacdPill>
          <HelpMark>?</HelpMark>
          <MacdValue $c={TEXT_RED} $ml={23}>MACD:+0.15</MacdValue>
          <MacdValue $c="#333" $ml={22}>DIFF:+0.24</MacdValue>
          <MacdLink>查看暗盘资金</MacdLink>
        </MacdHead>
        <DeaLine>DEA:+0.17</DeaLine>
      </MacdPane>
      <GrayBand $h={13} $mt={9} />

      <SectionTabs>
        <SectionTab>AI策略</SectionTab>
        <SectionTab>资讯</SectionTab>
        <SectionTab>盘口</SectionTab>
        <SectionTab>资金</SectionTab>
        <SectionTab>社区</SectionTab>
        <SectionTab $active>简讯(510)</SectionTab>
      </SectionTabs>
      <Footer>
        <FooterGrid>
          <SectorCell>
            <UpMark />
            <SectorName>电网设备</SectorName>
            <SectorPct>1.24%</SectorPct>
          </SectorCell>
          <ActionCell>
            <ActionIcon viewBox="0 0 72 66">
              <path d="M15 3.5H53A5 5 0 0 1 58 8.5V50L51 63H15A8 8 0 0 1 7 55V11.5A8 8 0 0 1 15 3.5Z" />
              <path d="M17 17H50M17 27H50M17 36H50M17 45H39" />
            </ActionIcon>
            <ActionLabel>下单</ActionLabel>
          </ActionCell>
          <ActionCell>
            <ActionIcon viewBox="0 0 72 66">
              <path d="M22 3H50" />
              <rect x="3" y="11" width="66" height="47" rx="9" />
              <path d="M36 27V43M28 35H44M14 58L12 64H20L22 58M58 58L60 64H52L50 58" />
            </ActionIcon>
            <ActionLabel>诊股</ActionLabel>
          </ActionCell>
          <ActionCell>
            <ActionIcon viewBox="0 0 72 66">
              <rect x="8" y="3" width="56" height="56" />
              <path d="M36 15V47M21 31H51" />
            </ActionIcon>
            <ActionLabel>加自选</ActionLabel>
          </ActionCell>
          <ActionCell>
            <ActionIcon viewBox="0 0 72 66">
              <ellipse cx="36" cy="32" rx="29" ry="29" />
              <path d="M23 24H49M23 40H49" />
            </ActionIcon>
            <ActionLabel>功能</ActionLabel>
          </ActionCell>
        </FooterGrid>
        <GestureRow>
          <GestureBar $w={286} />
          <GestureBar $w={396} />
          <GestureBar $w={285} />
        </GestureRow>
        <Watermark>
          <svg width="42" height="44" viewBox="0 0 42 44" fill="none" stroke="rgba(255,255,255,.7)" strokeWidth="4">
            <circle cx="21" cy="22" r="18" />
            <path d="M11 10C18 16 12 24 17 34M31 10C24 18 30 26 25 34" />
          </svg>
          <span>雪球：可转债网格交易策略</span>
        </Watermark>
      </Footer>
    </Page>
  );
}
